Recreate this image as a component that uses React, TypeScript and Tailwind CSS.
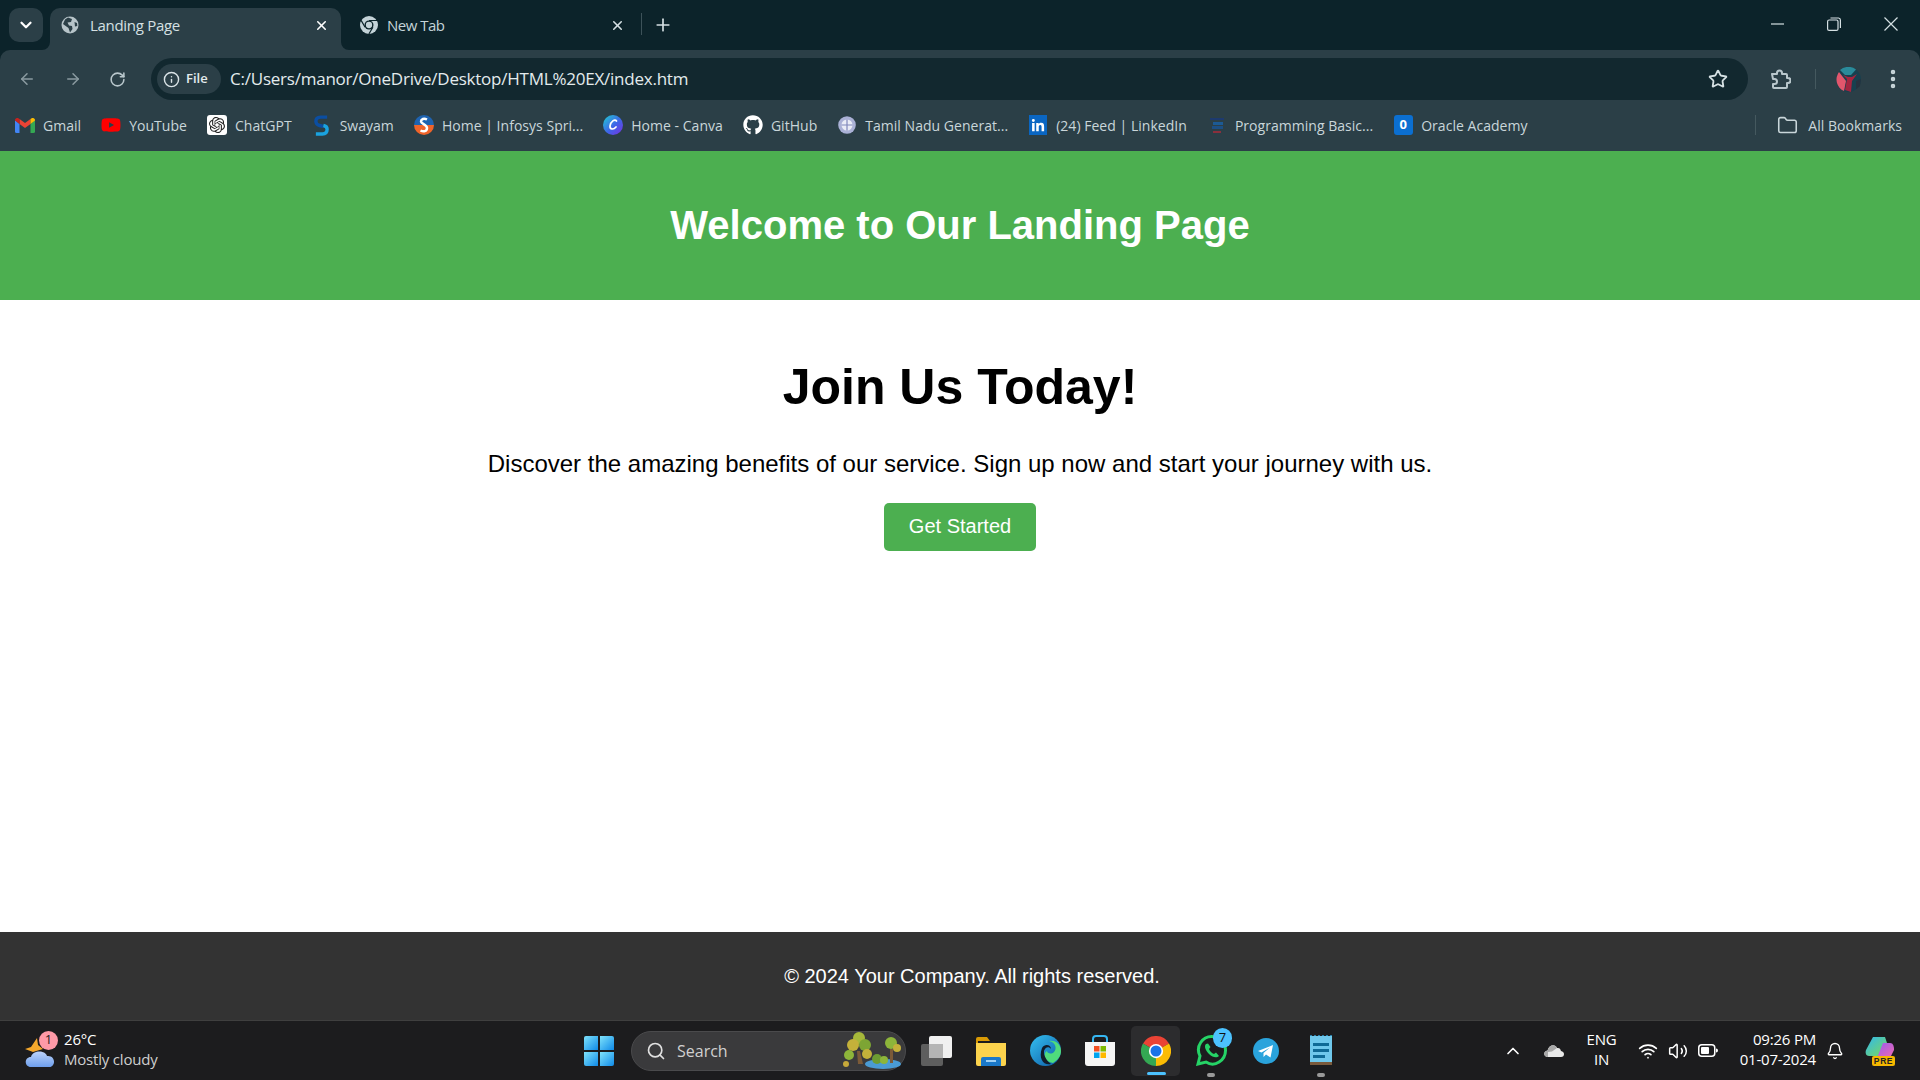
import { ArrowLeft, ArrowRight, RotateCw, Star, EllipsisVertical, Folder, X, Plus, ChevronDown, ChevronUp, Info, Search, Wifi, Volume2, Bell } from 'lucide-react';
import { FaGithub, FaLinkedinIn, FaYoutube } from 'react-icons/fa';
import { SiOpenai } from 'react-icons/si';

const uiFont = { fontFamily: '"Open Sans", "Noto Sans", sans-serif' };

// Browser favicons and taskbar logos, drawn by hand
const ChromeLogo = ({ size }: { size: number }) => (
  <svg width={size} height={size} viewBox="0 0 24 24">
    <path d="M12 12 1.600 6A12 12 0 0 1 22.400 6Z" fill="#ea4335" />
    <path d="M12 12 1.600 6A12 12 0 0 0 12 24Z" fill="#34a853" />
    <path d="M12 12 22.400 6A12 12 0 0 1 12 24Z" fill="#fbbc04" />
    <circle cx="12" cy="12" r="5.700" fill="#fff" />
    <circle cx="12" cy="12" r="4.400" fill="#1a73e8" />
  </svg>
);

const ChromeMono = () => (
  <svg width="18" height="18" viewBox="0 0 24 24">
    <circle cx="12" cy="12" r="12" fill="#c4d3d8" />
    <circle cx="12" cy="12" r="6" fill="#0c232a" />
    <circle cx="12" cy="12" r="4.200" fill="#c4d3d8" />
    <path d="M12 6H23M6.800 15 1.500 5.800M17.200 15 11.800 24" stroke="#0c232a" strokeWidth="1.600" />
  </svg>
);

const GlobeIcon = () => (
  <svg width="18" height="18" viewBox="0 0 18 18">
    <circle cx="9" cy="9" r="8.500" fill="#b7c4c9" />
    <path d="M7 1.500 11 3 10 6 6.500 6.500 8 9.500 11 10 11.500 13 9 16.500 7.500 12 4 9.500 2 8 4 3.500Z" fill="#2b3f47" />
    <path d="M13.500 6 16 7 16.300 10 14 10.500Z" fill="#2b3f47" />
  </svg>
);

const GmailIcon = () => (
  <svg width="20" height="15" viewBox="0 0 20 15">
    <path d="M0 2v11.500A1.500 1.500 0 0 0 1.500 15H4.500V6Z" fill="#4285f4" />
    <path d="M20 2v11.500a1.500 1.500 0 0 1-1.500 1.500H15.500V6Z" fill="#34a853" />
    <path d="M4.500 6 10 10 15.500 6V1L10 5 4.500 1Z" fill="#ea4335" />
    <path d="M0 2C0 .5 2-.6 3.300.3L4.500 1V6L0 2.600Z" fill="#c5221f" />
    <path d="M20 2c0-1.500-2-2.600-3.300-1.700L15.500 1V6L20 2.600Z" fill="#fbbc04" />
  </svg>
);

const SwayamIcon = () => (
  <svg width="15" height="21" viewBox="0 0 16 22">
    <path d="M14 2H7C3 2 2 4 2 6.500 2 9 4 10.500 6 11L10 12" fill="none" stroke="#0b4ea2" strokeWidth="3.600" />
    <path d="M2 20H9C13 20 14 17.500 14 15 14 13 12.500 11.500 10 11" fill="none" stroke="#1aa3e0" strokeWidth="3.600" />
  </svg>
);

const InfosysIcon = () => (
  <svg width="20" height="20" viewBox="0 0 20 20">
    <path d="M0 10a10 10 0 0 1 20 0Z" fill="#1e63b0" />
    <path d="M0 10a10 10 0 0 0 20 0Z" fill="#f0642a" />
    <path d="M13 4.500C10 3 7 4 7 6.500S13 9.500 13 13 9.500 17 6.500 15.500" fill="none" stroke="#fff" strokeWidth="2.500" />
  </svg>
);

const CanvaIcon = () => (
  <svg width="20" height="20" viewBox="0 0 20 20">
    <defs>
      <linearGradient id="canva" x1="0" y1="0" x2="1" y2="1">
        <stop offset="0" stopColor="#1fd0d0" />
        <stop offset="0.550" stopColor="#3f64e8" />
        <stop offset="1" stopColor="#7a2fe0" />
      </linearGradient>
    </defs>
    <circle cx="10" cy="10" r="10" fill="url(#canva)" />
    <path d="M13.500 6C12 3.500 7.500 6.500 7 11c-.3 3.500 3.500 4 6 1" fill="none" stroke="#fff" strokeWidth="1.700" strokeLinecap="round" />
  </svg>
);

const TamilIcon = () => (
  <svg width="18" height="20" viewBox="0 0 18 20">
    <circle cx="9" cy="10" r="8.800" fill="#aab1d6" />
    <circle cx="9" cy="10" r="5.500" fill="#e9ecf6" />
    <path d="M3.500 10h11M9 4.500v11" stroke="#8088bb" strokeWidth="1.200" />
  </svg>
);

const ProgrammingIcon = () => (
  <svg width="16" height="20" viewBox="0 0 16 20">
    <rect x="1" y="3" width="14" height="2" fill="#1d3a6e" />
    <rect x="4" y="7" width="10" height="3" fill="#1c5a94" />
    <rect x="3" y="11" width="11" height="3" fill="#1c4f84" />
    <rect x="4" y="16" width="8" height="2" fill="#8a2f3c" />
  </svg>
);

const ExtensionIcon = () => (
  <svg width="21" height="21" viewBox="0 0 21 21" fill="none" stroke="#b9c7cc" strokeWidth="2" strokeLinejoin="round">
    <path d="M2 5H7V4A2.500 2.500 0 0 1 12 4V5H16A1 1 0 0 1 17 6V9H18A2.500 2.500 0 0 1 18 14H17V18A1 1 0 0 1 16 19H4A1 1 0 0 1 3 18V15H4.500A2.500 2.500 0 0 0 4.500 10H3Z" />
  </svg>
);

const Avatar = () => (
  <svg width="25" height="25" viewBox="0 0 25 25">
    <circle cx="12.500" cy="12.500" r="12.500" fill="#17404f" />
    <path d="M3 5A12.500 12.500 0 0 0 8 24L10 14Z" fill="#e2566c" />
    <path d="M4 3A12.500 12.500 0 0 1 20 2.500L15 8 9 8Z" fill="#2a8a9a" />
    <path d="M7 8 11 12 9 23 15 25 16 14 21 7 16 10 12 10Z" fill="#a5243f" />
    <path d="M20 14 25 12 24 19 20 22Z" fill="#26323f" />
  </svg>
);

const WeatherIcon = () => (
  <svg width="30" height="30" viewBox="0 0 30 30">
    <defs>
      <linearGradient id="cloud" x1="0" y1="0" x2="0" y2="1">
        <stop offset="0" stopColor="#bcd3fa" />
        <stop offset="1" stopColor="#6d9eec" />
      </linearGradient>
    </defs>
    <path d="M12 1 13 8 18 12 8 15 0 12 6 10Z" fill="#f4a72c" />
    <path d="M6 30C-1 30-1 20 6 20 8 13 20 13 22 19 31 18 31 30 24 30Z" fill="url(#cloud)" />
  </svg>
);

const WindowsLogo = () => (
  <svg width="30" height="30" viewBox="0 0 30 30">
    <defs>
      <linearGradient id="win" x1="0" y1="0" x2="1" y2="1">
        <stop offset="0" stopColor="#7fe3fb" />
        <stop offset="1" stopColor="#0f8ae8" />
      </linearGradient>
    </defs>
    <path d="M2 0H14V14H0V2A2 2 0 0 1 2 0Z" fill="url(#win)" />
    <path d="M16 0H28A2 2 0 0 1 30 2V14H16Z" fill="url(#win)" />
    <path d="M0 16H14V30H2A2 2 0 0 1 0 28Z" fill="url(#win)" />
    <path d="M16 16H30V28A2 2 0 0 1 28 30H16Z" fill="url(#win)" />
  </svg>
);

const SearchArt = () => (
  <svg width="60" height="40" viewBox="0 0 60 40">
    <ellipse cx="40" cy="33" rx="18" ry="5" fill="#4a9bd4" />
    <path d="M14 20h3l3 13h-5Z" fill="#7b5a38" />
    <path d="M47 18h3v14h-3Z" fill="#7b5a38" />
    <circle cx="16" cy="7" r="6" fill="#a6b83a" />
    <circle cx="10" cy="14" r="6" fill="#c4b13a" />
    <circle cx="22" cy="14" r="6" fill="#7da534" />
    <circle cx="6" cy="24" r="5" fill="#8db53a" />
    <circle cx="24" cy="23" r="5" fill="#c4b13a" />
    <circle cx="3" cy="33" r="3" fill="#c7a93a" />
    <circle cx="48" cy="12" r="6" fill="#8db53a" />
    <circle cx="54" cy="17" r="4" fill="#c4b13a" />
    <circle cx="34" cy="28" r="5" fill="#6d9c32" />
    <circle cx="41" cy="29" r="4" fill="#8db53a" />
  </svg>
);

const TaskView = () => (
  <svg width="31" height="30" viewBox="0 0 31 30">
    <rect x="8" y="0" width="23" height="22" rx="2" fill="#f0f0f0" />
    <rect x="0" y="8" width="22" height="22" rx="2" fill="#6a6a6a" fillOpacity="0.850" />
    <rect x="8" y="8" width="14" height="14" fill="#b5b5b5" />
  </svg>
);

const ExplorerIcon = () => (
  <svg width="30" height="30" viewBox="0 0 30 30">
    <path d="M0 3A2 2 0 0 1 2 1H11L14 5H2V8H0Z" fill="#d99a05" />
    <path d="M0 7H30V28A2 2 0 0 1 28 30H2A2 2 0 0 1 0 28Z" fill="#fcd34d" />
    <path d="M5 30V23A2 2 0 0 1 7 21H23A2 2 0 0 1 25 23V30Z" fill="#1a78c9" />
    <rect x="10" y="24" width="10" height="2" fill="#9ed0f5" />
  </svg>
);

const EdgeIcon = () => (
  <svg width="31" height="31" viewBox="0 0 31 31">
    <defs>
      <linearGradient id="edgeA" x1="0" y1="0" x2="1" y2="1">
        <stop offset="0" stopColor="#35c1f1" />
        <stop offset="1" stopColor="#0c59a4" />
      </linearGradient>
    </defs>
    <circle cx="15.500" cy="15.500" r="15.500" fill="url(#edgeA)" />
    <path d="M31 16C31 8 24 5 19 6 26 7 27 14 24 17 21 20 17 18 17 16 12 19 15 27 23 28 28 25 31 21 31 16Z" fill="#4fdb7c" />
    <path d="M12 13C15 8 21 10 21 14 19 11 15 12 14 16 13.500 21 17 26 21 29 14 31 8 24 12 13Z" fill="#111d2b" />
  </svg>
);

const StoreIcon = () => (
  <svg width="30" height="32" viewBox="0 0 30 32">
    <path d="M8 7V4A3 3 0 0 1 11 1H19A3 3 0 0 1 22 4V7" fill="none" stroke="#35b6f2" strokeWidth="2" />
    <path d="M0 7H30V28A3 3 0 0 1 27 31H3A3 3 0 0 1 0 28Z" fill="#f5f5f5" />
    <rect x="9" y="11" width="5.500" height="5.500" fill="#f25022" />
    <rect x="15.500" y="11" width="5.500" height="5.500" fill="#7fba00" />
    <rect x="9" y="17.500" width="5.500" height="5.500" fill="#00a4ef" />
    <rect x="15.500" y="17.500" width="5.500" height="5.500" fill="#ffb900" />
  </svg>
);

const WhatsAppIcon = () => (
  <svg width="31" height="31" viewBox="0 0 31 31">
    <path d="M2 29 4 21C-1 11 7 1.500 15.500 1.500 24 1.500 29.500 8 29.500 15.500 29.500 25 19 33 10 27Z" fill="none" stroke="#25d366" strokeWidth="3" />
    <path d="M10 9C8 11 9 15 13 19 17 23 21 23 23 21L20 17.500 18 19C16 18.500 13.500 16 13 14L14.500 12 12 8.500Z" fill="#25d366" />
  </svg>
);

const TelegramIcon = () => (
  <svg width="26" height="26" viewBox="0 0 26 26">
    <circle cx="13" cy="13" r="13" fill="#2aa3dc" />
    <path d="M5 13 20 7 17.500 19.500 13 16.500 10.500 19V15L17 9.500 8.500 14.500Z" fill="#fff" />
  </svg>
);

const NotepadIcon = () => (
  <svg width="22" height="31" viewBox="0 0 22 31">
    <rect x="0" y="1" width="22" height="28" fill="#6fc8ec" />
    <rect x="0" y="27" width="22" height="3" fill="#7a5a3c" />
    <path d="M1 1V0M5 1V0M9 1V0M13 1V0M17 1V0M21 1V0" stroke="#2b7ea6" strokeWidth="2" />
    <rect x="3" y="8" width="16" height="3" fill="#0f6a96" />
    <rect x="3" y="14" width="16" height="3" fill="#0f6a96" />
    <rect x="3" y="20" width="12" height="3" fill="#0f6a96" />
  </svg>
);

const OneDriveIcon = () => (
  <svg width="20" height="14" viewBox="0 0 20 14">
    <path d="M4 13C-1 13-1 7 3.500 6.500 5 1 11-.5 13 4 16 3.500 16.500 5.500 17 7 21 7.500 21 13 17 13Z" fill="#e8e8e8" />
    <path d="M4 13C-1 13-1 7 3.500 6.500 5 1 11-.5 13 4L8 7.500 4 8Z" fill="#a8a8a8" />
  </svg>
);

const BatteryIcon = () => (
  <svg width="20" height="13" viewBox="0 0 20 13">
    <rect x="0.750" y="0.750" width="16" height="11.500" rx="3" fill="none" stroke="#fff" strokeWidth="1.500" />
    <rect x="3" y="3" width="8" height="7" rx="1" fill="#fff" />
    <path d="M18 4.500A2 2 0 0 1 18 8.500Z" fill="#fff" />
  </svg>
);

const CopilotIcon = () => (
  <svg width="30" height="30" viewBox="0 0 30 30">
    <defs>
      <linearGradient id="copA" x1="0" y1="0" x2="1" y2="1">
        <stop offset="0" stopColor="#2fb8f0" />
        <stop offset="1" stopColor="#7dd957" />
      </linearGradient>
      <linearGradient id="copB" x1="0" y1="0" x2="1" y2="1">
        <stop offset="0" stopColor="#9a5cf0" />
        <stop offset="1" stopColor="#f06ab0" />
      </linearGradient>
    </defs>
    <path d="M8 1H20L22 7 14 20H4C1 20 0 17 1 14Z" fill="url(#copA)" />
    <path d="M18 7H25C29 7 29 12 29 14L25 22H12Z" fill="url(#copB)" />
    <rect x="7" y="20" width="23" height="10" rx="2" fill="#f5b700" />
    <text x="18.500" y="28" textAnchor="middle" fontSize="8.500" fontWeight="700" fill="#222" fontFamily="Liberation Sans, sans-serif" letterSpacing="0.600">PRE</text>
  </svg>
);

// Tab shape with the two concave feet at the bottom
const TabFoot = ({ side }: { side: 'left' | 'right' }) => (
  <svg
    width="8"
    height="8"
    viewBox="0 0 8 8"
    className={side === 'left' ? 'absolute bottom-0 -left-2' : 'absolute bottom-0 -right-2'}
  >
    <path d={side === 'left' ? 'M8 0V8H0A8 8 0 0 0 8 0Z' : 'M0 0V8H8A8 8 0 0 1 0 0Z'} fill="#2b3f47" />
  </svg>
);

const bookmarks = [
  { icon: <GmailIcon />, label: 'Gmail' },
  { icon: <FaYoutube className="w-5 h-5 text-[#ff0000]" />, label: 'YouTube' },
  {
    icon: (
      <span className="w-5 h-5 rounded-[3px] bg-white flex items-center justify-center">
        <SiOpenai className="w-4 h-4 text-[#222]" />
      </span>
    ),
    label: 'ChatGPT',
  },
  { icon: <SwayamIcon />, label: 'Swayam' },
  { icon: <InfosysIcon />, label: 'Home | Infosys Spri...' },
  { icon: <CanvaIcon />, label: 'Home - Canva' },
  { icon: <FaGithub className="w-5 h-5 text-white" />, label: 'GitHub' },
  { icon: <TamilIcon />, label: 'Tamil Nadu Generat...' },
  {
    icon: (
      <span className="w-[18px] h-5 bg-[#0a66c2] flex items-end justify-center pb-[2px]">
        <FaLinkedinIn className="w-[14px] h-[14px] text-white" />
      </span>
    ),
    label: '(24) Feed | LinkedIn',
  },
  { icon: <ProgrammingIcon />, label: 'Programming Basic...' },
  {
    icon: (
      <span className="w-[19px] h-5 rounded-[3px] bg-[#0b6fd1] text-white text-[13px] font-bold flex items-center justify-center">
        0
      </span>
    ),
    label: 'Oracle Academy',
  },
];

const BrowserChrome = () => (
  <div className="bg-[#0c232a] text-[#c9d6da]" style={uiFont}>
    {/* Tab strip */}
    <div className="h-[50px] flex items-end">
      <div className="self-start mt-2 ml-[9px] w-[34px] h-[34px] rounded-[10px] bg-[#2b3f47] flex items-center justify-center">
        <ChevronDown className="w-[18px] h-[18px] text-white" strokeWidth={3} />
      </div>
      <div className="relative ml-[7px] w-[291px] h-[42px] rounded-t-[10px] bg-[#2b3f47] flex items-center pl-[11px] pr-[12px] pb-[8px]">
        <TabFoot side="left" />
        <TabFoot side="right" />
        <GlobeIcon />
        <span className="ml-[11px] text-[15px] tracking-[-0.3px] text-[#d5e0e3]">Landing Page</span>
        <X className="ml-auto w-[15px] h-[15px] text-white" strokeWidth={2.500} />
      </div>
      <div className="ml-[19px] w-[265px] h-[42px] flex items-center pb-[8px]">
        <ChromeMono />
        <span className="ml-[9px] text-[15px] tracking-[-0.5px] text-[#c4d3d8]">New Tab</span>
        <X className="ml-auto w-[15px] h-[15px] text-[#d5e0e3]" strokeWidth={2.500} />
      </div>
      <div className="mb-[15px] ml-[16px] w-px h-[22px] bg-[#3d5259]" />
      <Plus className="mb-[15px] ml-[11px] w-[20px] h-[20px] text-[#d5e0e3]" strokeWidth={2} />
      <div className="ml-auto mr-[22px] mb-[19px] flex items-center gap-[43px] text-[#d5e0e3]">
        <svg width="13" height="14" viewBox="0 0 13 14" stroke="currentColor" strokeWidth="1.200">
          <path d="M0 7H13" />
        </svg>
        <svg width="14" height="14" viewBox="0 0 14 14" fill="none" stroke="currentColor" strokeWidth="1.200">
          <rect x="0.600" y="3" width="10.400" height="10.400" rx="1.500" />
          <path d="M3.500 1H11.500A2 2 0 0 1 13.400 3V11" />
        </svg>
        <svg width="14" height="14" viewBox="0 0 14 14" stroke="currentColor" strokeWidth="1.200">
          <path d="M.5.500 13.500 13.500M13.500.500.500 13.500" />
        </svg>
      </div>
    </div>

    {/* Address bar */}
    <div className="h-[50px] pt-[8px] bg-[#2b3f47] rounded-t-[10px] flex items-center">
      <div className="flex items-center pl-[18px] gap-[28px] text-[#8b9ba1]">
        <ArrowLeft className="w-[18px] h-[18px]" />
        <ArrowRight className="w-[18px] h-[18px]" />
      </div>
      <RotateCw className="ml-[27px] w-[17px] h-[17px] text-[#b9c7cc]" strokeWidth={2.200} />
      <div className="ml-[25px] w-[1597px] h-[42px] rounded-full bg-[#12282f] flex items-center pl-[6px] pr-[20px]">
        <div className="w-[64px] h-[30px] rounded-full bg-[#2b3f47] flex items-center pl-[6px] gap-[6px]">
          <Info className="w-[17px] h-[17px] text-[#dbe4e7]" strokeWidth={2} />
          <span className="text-[13px] font-semibold text-[#e3ebed]">File</span>
        </div>
        <span className="ml-[9px] text-[17px] tracking-[-0.23px] text-[#e3ebed]">C:/Users/manor/OneDrive/Desktop/HTML%20EX/index.htm</span>
        <Star className="ml-auto w-[20px] h-[20px] text-[#d5e0e3]" strokeWidth={2.200} />
      </div>
      <div className="ml-[22px]">
        <ExtensionIcon />
      </div>
      <div className="ml-[24px] w-px h-[20px] bg-[#45595f]" />
      <div className="ml-[20px]">
        <Avatar />
      </div>
      <EllipsisVertical className="ml-[20px] w-[24px] h-[24px] text-[#c9d6da]" strokeWidth={2.500} />
    </div>

    {/* Bookmarks bar */}
    <div className="h-[51px] bg-[#2b3f47] flex items-center pl-[15px] pr-[18px] text-[14px] tracking-[0.03px] text-[#c9d6da] pb-[1px]">
      <div className="flex items-center gap-[20px]">
        {bookmarks.map((b) => (
          <div key={b.label} className="flex items-center gap-[8px]">
            <span className="w-[20px] flex items-center justify-center">{b.icon}</span>
            <span className="whitespace-nowrap">{b.label}</span>
          </div>
        ))}
      </div>
      <div className="ml-auto flex items-center">
        <div className="w-px h-[20px] bg-[#45595f]" />
        <Folder className="ml-[21px] w-[21px] h-[21px] text-[#c9d6da]" strokeWidth={1.800} />
        <span className="ml-[10px] whitespace-nowrap">All Bookmarks</span>
      </div>
    </div>
  </div>
);

const PageContent = () => (
  <div className="flex-1 flex flex-col bg-white text-black" style={{ fontFamily: '"Liberation Sans", Arial, sans-serif' }}>
    <header className="h-[149px] bg-[#4caf50] flex items-center justify-center pb-[2px]">
      <h1 className="text-[40px] font-bold text-white">Welcome to Our Landing Page</h1>
    </header>
    <main className="flex-1 flex flex-col items-center pt-[59px]">
      <h2 className="text-[50px] leading-[57px] font-bold">Join Us Today!</h2>
      <p className="mt-[34px] text-[24px] leading-[28px]">Discover the amazing benefits of our service. Sign up now and start your journey with us.</p>
      <button className="mt-[25px] w-[152px] h-[48px] pb-[2px] rounded-[5px] bg-[#4caf50] text-white text-[20px]">Get Started</button>
    </main>
    <footer className="h-[88px] bg-[#333333] text-white text-[20px] flex items-center justify-center pl-[24px]">
      © 2024 Your Company. All rights reserved.
    </footer>
  </div>
);

const Taskbar = () => (
  <div className="h-[60px] bg-[#1c1c1e] border-t border-[#3f3f3f] flex items-center text-white" style={uiFont}>
    {/* Weather */}
    <div className="relative ml-[25px] w-[30px] h-[30px] mt-[2px]">
      <WeatherIcon />
      <span className="absolute -top-[6px] left-[14px] w-[19px] h-[19px] rounded-full bg-[#ff9aa8] text-[#222] text-[13px] flex items-center justify-center">1</span>
    </div>
    <div className="ml-[9px] w-[520px] text-[15px] leading-[20px] tracking-[-0.2px] pb-[4px]">
      <div>26°C</div>
      <div className="text-[#cfcfcf]">Mostly cloudy</div>
    </div>

    {/* Center icons */}
    <WindowsLogo />
    <div className="ml-[17px] w-[275px] h-[40px] rounded-full bg-[#3a3a3c] border border-[#4a4a4c] flex items-center pl-[14px] pr-[2px]">
      <Search className="w-[20px] h-[20px] text-[#e0e0e0]" strokeWidth={2} />
      <span className="ml-[11px] text-[16px] text-[#d0d0d0]">Search</span>
      <span className="ml-auto">
        <SearchArt />
      </span>
    </div>
    <div className="ml-[15px]">
      <TaskView />
    </div>
    <div className="ml-[24px]">
      <ExplorerIcon />
    </div>
    <div className="ml-[24px]">
      <EdgeIcon />
    </div>
    <div className="ml-[24px]">
      <StoreIcon />
    </div>
    <div className="relative ml-[16px] w-[49px] h-[50px] rounded-[5px] bg-[#2c2c2e] flex items-center justify-center">
      <ChromeLogo size={30} />
      <span className="absolute bottom-[1px] left-[16px] w-[19px] h-[3px] rounded-full bg-[#4cc2ff]" />
    </div>
    <div className="relative ml-[16px]">
      <WhatsAppIcon />
      <span className="absolute -top-[7px] left-[17px] w-[19px] h-[20px] rounded-full bg-[#4cc2ff] text-[#111] text-[13px] flex items-center justify-center">7</span>
      <span className="absolute -bottom-[11px] left-[11px] w-[8px] h-[4px] rounded-full bg-[#9a9a9a]" />
    </div>
    <div className="ml-[26px]">
      <TelegramIcon />
    </div>
    <div className="relative ml-[31px]">
      <NotepadIcon />
      <span className="absolute -bottom-[11px] left-[7px] w-[8px] h-[4px] rounded-full bg-[#9a9a9a]" />
    </div>

    {/* System tray */}
    <ChevronUp className="ml-[171px] w-[20px] h-[20px]" strokeWidth={2} />
    <div className="ml-[21px]">
      <OneDriveIcon />
    </div>
    <div className="ml-[19px] w-[37px] text-center text-[15px] leading-[20px] tracking-[-0.2px] whitespace-nowrap pb-[4px]">
      <div>ENG</div>
      <div>IN</div>
    </div>
    <Wifi className="ml-[18px] w-[20px] h-[20px]" strokeWidth={2} />
    <Volume2 className="ml-[10px] w-[20px] h-[20px]" strokeWidth={1.800} />
    <div className="ml-[10px]">
      <BatteryIcon />
    </div>
    <div className="ml-[19px] w-[79px] text-right text-[15px] leading-[20px] tracking-[-0.2px] whitespace-nowrap pb-[4px]">
      <div>09:26 PM</div>
      <div>01-07-2024</div>
    </div>
    <Bell className="ml-[10px] w-[18px] h-[18px]" strokeWidth={1.800} />
    <div className="ml-[21px]">
      <CopilotIcon />
    </div>
  </div>
);

export default function App() {
  return (
    <div className="w-[1920px] h-[1080px] overflow-hidden flex flex-col">
      <BrowserChrome />
      <PageContent />
      <Taskbar />
    </div>
  );
}
